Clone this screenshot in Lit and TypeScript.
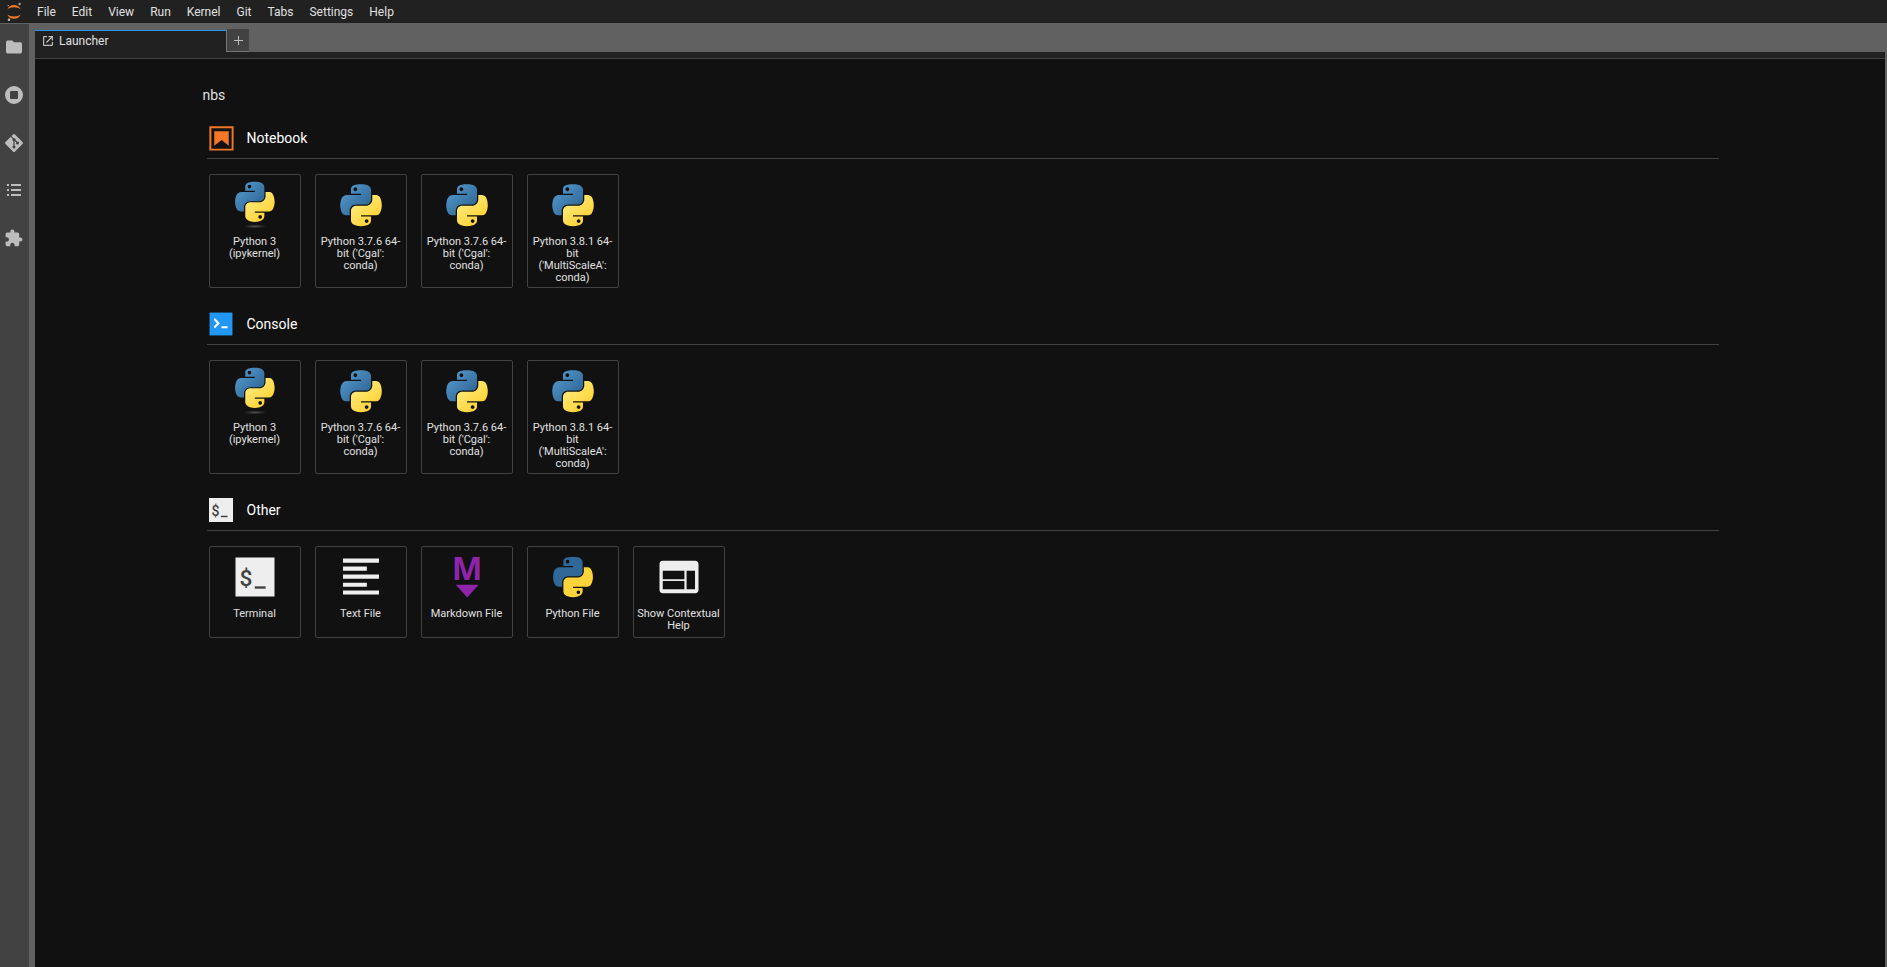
import { LitElement, html, css, svg, TemplateResult } from "lit";
import { customElement, property } from "lit/decorators.js";

const PY_BLUE =
  "M54.918785 .00091927C50.335132 .02221727 45.957846 .41313697 42.106285 1.0946693 30.760069 3.0991731 28.700036 7.2947714 28.700035 15.032169v10.21875h26.8125v3.40625h-26.8125-10.0625c-7.792459 0-14.6157588 4.683717-16.7499998 13.59375-2.46181998 10.212966-2.57101508 16.586023 0 27.25 1.9059283 7.937852 6.4575432 13.593748 14.2499998 13.59375h9.21875v-12.25c0-8.849902 7.657144-16.656248 16.75-16.65625h26.78125c7.454951 0 13.406253-6.138164 13.40625-13.625v-25.53125c0-7.2663386-6.12998-12.7247771-13.40625-13.9374997C64.281548.32794397 59.502438-.02037903 54.918785.00091927zm-14.5 8.21875013c2.769547 0 5.03125 2.2986456 5.03125 5.1249996 0 2.816336-2.261703 5.09375-5.03125 5.09375-2.779476 0-5.03125-2.277415-5.03125-5.09375 0-2.826353 2.251774-5.1249996 5.03125-5.1249996z";
const PY_YELLOW =
  "M85.637535 28.657169v11.90625c0 9.230755-7.825895 16.999999-16.75 17h-26.78125c-7.335833 0-13.406249 6.278483-13.40625 13.625v25.531247c0 7.266344 6.318588 11.540324 13.40625 13.625004 8.487331 2.49561 16.626237 2.94663 26.78125 0 6.750155-1.95439 13.406253-5.88761 13.40625-13.625004V86.500919h-26.78125v-3.40625h40.187504c7.792461 0 10.696251-5.435408 13.406241-13.59375 2.79933-8.398886 2.68022-16.475776 0-27.25-1.92578-7.757441-5.60387-13.59375-13.406241-13.59375zm-15.0625 64.65625c2.779478 0 5.03125 2.277417 5.03125 5.093747 0 2.826354-2.251775 5.125004-5.03125 5.125004-2.76955 0-5.03125-2.29865-5.03125-5.125004 0-2.81633 2.261697-5.093747 5.03125-5.093747z";

const gradients = svg`<defs>
  <linearGradient id="b" x1="0" y1="0" x2=".8" y2=".8"><stop offset="0" stop-color="#5a9fd4"/><stop offset="1" stop-color="#306998"/></linearGradient>
  <linearGradient id="y" x1=".3" y1=".2" x2=".75" y2=".75"><stop offset="0" stop-color="#ffe873"/><stop offset="1" stop-color="#ffd43b"/></linearGradient>
  <radialGradient id="s"><stop offset="0" stop-color="#b8b8b8" stop-opacity=".4"/><stop offset="1" stop-color="#7f7f7f" stop-opacity="0"/></radialGradient>
</defs>`;

const icons: Record<string, TemplateResult> = {
  jupyter: html`<svg width="18" height="20" viewBox="0 0 18 20">
    <path fill="#f37726" d="M2.300 7.300C3.400 4.600 5.900 3 9 3s5.600 1.600 6.700 4.300C14 6 11.800 5.300 9 5.300S4 6 2.300 7.300zM2.300 12.500C4 13.800 6.200 14.500 9 14.500s5-.7 6.700-2c-1.100 2.700-3.600 4.300-6.700 4.300S3.400 15.200 2.300 12.500z"/>
    <circle cx="14.600" cy="2" r="1.200" fill="#9e9e9e"/><circle cx="3.200" cy="3.600" r=".7" fill="#bdbdbd"/><circle cx="4" cy="17.800" r="1.300" fill="#bdbdbd"/></svg>`,
  folder: html`<svg width="20" height="20" viewBox="-.5 -.5 25 25"><path fill="#bdbdbd" d="M10 4H4c-1.100 0-1.990.9-1.990 2L2 18c0 1.100.9 2 2 2h16c1.100 0 2-.9 2-2V8c0-1.100-.9-2-2-2h-8l-2-2z"/></svg>`,
  running: html`<svg width="20" height="20" viewBox="0 0 20 20"><path fill="#bdbdbd" fill-rule="evenodd" d="M10 1a9 9 0 1 0 0 18 9 9 0 0 0 0-18zM7 6h6a1 1 0 0 1 1 1v6a1 1 0 0 1-1 1H7a1 1 0 0 1-1-1V7a1 1 0 0 1 1-1z"/></svg>`,
  git: html`<svg width="20" height="20" viewBox="0 0 20 20"><path fill="#bdbdbd" d="M11 1.500a1.400 1.400 0 0 0-2 0L1.500 9a1.400 1.400 0 0 0 0 2L9 18.500a1.400 1.400 0 0 0 2 0L18.500 11a1.400 1.400 0 0 0 0-2z"/><path d="M6.800 3.200 10 6.400V14M10 6.400l3.600 3.600" fill="none" stroke="#424242" stroke-width="1.200"/><g fill="#424242"><circle cx="10" cy="6.600" r="1.500"/><circle cx="10" cy="14" r="1.500"/><circle cx="13.500" cy="10" r="1.500"/></g></svg>`,
  list: html`<svg width="20" height="20" viewBox="0 1 20 20"><path fill="#bdbdbd" d="M3 4h2v2H3zM7 4h10v2H7zM3 9h2v2H3zM7 9h10v2H7zM3 14h2v2H3zM7 14h10v2H7z"/></svg>`,
  puzzle: html`<svg width="20" height="20" viewBox="0 .5 25 25"><path fill="#bdbdbd" d="M20.500 11H19V7c0-1.100-.9-2-2-2h-4V3.500C13 2.120 11.880 1 10.500 1S8 2.120 8 3.500V5H4c-1.100 0-1.990.9-1.990 2v3.800H3.500c1.490 0 2.700 1.210 2.700 2.700s-1.210 2.700-2.700 2.700H2V20c0 1.100.9 2 2 2h3.800v-1.500c0-1.490 1.210-2.700 2.700-2.700 1.490 0 2.700 1.210 2.700 2.700V22H17c1.100 0 2-.9 2-2v-4h1.500c1.380 0 2.500-1.120 2.500-2.500S21.880 11 20.500 11z"/></svg>`,
  launch: html`<svg width="14" height="14" viewBox="0 0 14 14"><path fill="#bdbdbd" d="M6 2v1.200H3.200v7.600h7.600V8H12v3a1 1 0 0 1-1 1H3a1 1 0 0 1-1-1V3a1 1 0 0 1 1-1zM7.500 2v1.200h2.400L5 8.100l.9.900 4.900-4.900v2.400H12V2z"/></svg>`,
  notebook: html`<svg viewBox="0 0 22 22"><path fill="#f37726" d="M18.700 3.300v15.400H3.300V3.300h15.400m1.500-1.500H1.800v18.300h18.300zM16.500 16.500l-5.400-4.300-5.600 4.300v-11h11z"/></svg>`,
  console: html`<svg viewBox="0 0 200 200"><path fill="#2196f3" d="M12 12h176v176H12z"/><path fill="#fff" d="m43 66 11-10 37 38-37 38-11-10 26-28zM104 118h46v15h-46z"/></svg>`,
  terminal: html`<svg viewBox="0 0 24 24"><path fill="#eee" d="M3 3h18v18H3z"/><text x="4.800" y="16.300" font-family="Roboto, sans-serif" font-size="10.500" font-weight="500" fill="#424242">$</text><path fill="#424242" d="M11.900 16.300h5v1.100h-5z"/></svg>`,
  text: html`<svg viewBox="0 0 24 24"><path fill="#eee" d="M3.700 3.500h16.600v1.900H3.700zM3.700 7.200h11v1.900h-11zM3.700 10.900h16.600v1.900H3.700zM3.700 14.600h11v1.900h-11zM3.700 18.200h16.600v1.900H3.700z"/></svg>`,
  markdown: html`<svg viewBox="0 0 24 24"><text x="12" y="13.200" text-anchor="middle" font-family="Open Sans, sans-serif" font-size="15" font-weight="700" fill="#8e24aa">M</text><path fill="#8e24aa" d="M6.800 15.600h10.600L12.100 21.500z"/></svg>`,
  help: html`<svg viewBox="0 0 24 24"><path fill="#eee" d="M19.500 4.500h-15c-1 0-1.500.7-1.500 1.500v12c0 .9.600 1.500 1.500 1.500h15c.9 0 1.500-.6 1.500-1.500V6c0-.9-.6-1.500-1.500-1.500zm-5 13.100H4.500v-3.800h10zm0-4.600H4.500V9.100h10zm4.900 4.600h-3.900V9.100h3.900z"/></svg>`,
  pyfile: html`<svg viewBox="-17 -15 145 142"><path fill="#306998" d=${PY_BLUE}/><path fill="#ffd43b" d=${PY_YELLOW}/></svg>`,
  python: html`<svg viewBox="-14 -14 139 139">${gradients}<path fill="url(#b)" d=${PY_BLUE}/><path fill="url(#y)" d=${PY_YELLOW}/></svg>`,
  kernel: html`<svg viewBox="-17 -8 146 146">${gradients}<path fill="url(#b)" d=${PY_BLUE}/><path fill="url(#y)" d=${PY_YELLOW}/><ellipse cx="56" cy="125" rx="34" ry="6" fill="url(#s)"/></svg>`,
};

@customElement("launcher-card")
class LauncherCard extends LitElement {
  @property() icon = "";
  @property() label = "";

  static styles = css`
    :host { display: block; }
    button {
      box-sizing: border-box;
      width: 100%;
      height: 100%;
      display: flex;
      flex-direction: column;
      align-items: center;
      padding: 4px 3px 0;
      border: 1px solid #424242;
      border-radius: 2px;
      background: #111;
      color: #e0e0e0;
      font: 11px/12px Roboto, sans-serif;
      text-align: center;
    }
    .icon { width: 52px; height: 52px; margin-bottom: 5px; }
    .icon svg { display: block; width: 100%; height: 100%; overflow: visible; }
    .label { width: 100%; white-space: pre-line; }
  `;

  render() {
    return html`<button type="button">
      <span class="icon">${icons[this.icon]}</span>
      <span class="label">${this.label}</span>
    </button>`;
  }
}

interface Card { icon: string; label: string; }
interface Section { title: string; icon: string; cards: Card[]; short?: boolean; }

const kernels: Card[] = [
  { icon: "kernel", label: "Python 3 (ipykernel)" },
  { icon: "python", label: "Python 3.7.6 64-bit ('Cgal': conda)" },
  { icon: "python", label: "Python 3.7.6 64-bit ('Cgal': conda)" },
  { icon: "python", label: "Python 3.8.1 64-bit\n('MultiScaleA': conda)" },
];

const sections: Section[] = [
  { title: "Notebook", icon: "notebook", cards: kernels },
  { title: "Console", icon: "console", cards: kernels },
  {
    title: "Other",
    icon: "terminal",
    short: true,
    cards: [
      { icon: "terminal", label: "Terminal" },
      { icon: "text", label: "Text File" },
      { icon: "markdown", label: "Markdown File" },
      { icon: "pyfile", label: "Python File" },
      { icon: "help", label: "Show Contextual Help" },
    ],
  },
];

const menus = ["File", "Edit", "View", "Run", "Kernel", "Git", "Tabs", "Settings", "Help"];
const panels = [
  ["folder", "File Browser"],
  ["running", "Running Terminals and Kernels"],
  ["git", "Git"],
  ["list", "Table of Contents"],
  ["puzzle", "Extension Manager"],
];

@customElement("app-root")
class AppRoot extends LitElement {
  static styles = css`
    :host {
      display: flex;
      flex-direction: column;
      height: 100vh;
      background: #616161;
      color: #e0e0e0;
      font: 12px/16px Roboto, sans-serif;
    }
    button { font: inherit; color: inherit; background: none; border: 0; padding: 0; }
    svg { display: block; overflow: visible; }
    .menubar {
      display: flex;
      align-items: center;
      height: 23px;
      padding-left: 5px;
      background: #212121;
      border-bottom: 1px solid #616161;
    }
    .menus { display: flex; margin-left: 6px; }
    .menus button { padding: 1px 8px 0; height: 23px; }
    .body { display: flex; flex: 1; min-height: 0; }
    .sidebar {
      display: flex;
      flex-direction: column;
      gap: 2px;
      width: 29px;
      margin-right: 6px;
      background: #424242;
    }
    .sidebar button {
      display: flex;
      align-items: center;
      justify-content: center;
      width: 28px;
      height: 46px;
    }
    .main { display: flex; flex-direction: column; flex: 1; min-width: 0; margin-right: 2px; }
    .tabs { display: flex; align-items: flex-end; height: 28px; }
    .tab {
      box-sizing: border-box;
      display: flex;
      align-items: center;
      gap: 4px;
      width: 191px;
      height: 22px;
      padding: 0 0 2px 6px;
      border-top: 1px solid #2196f3;
      background: #212121;
    }
    .add {
      display: flex;
      align-items: center;
      justify-content: center;
      align-self: flex-start;
      box-sizing: border-box;
      width: 23px;
      height: 23px;
      margin-top: 5px;
      border: 1px solid #757575;
      border-width: 0 0 1px 1px;
      background: #424242;
    }
    .toolbar { height: 6px; background: #212121; border-bottom: 1px solid #424242; }
    .launcher {
      flex: 1;
      overflow: auto;
      padding: 26px 9% 0;
      background: #111;
    }
    .cwd { margin: 0 0 21px; padding-left: 1px; font-size: 14px; line-height: 20px; }
    section { margin: 0 0 24px 5px; }
    header {
      display: flex;
      align-items: center;
      gap: 12px;
      height: 33px;
      box-sizing: border-box;
      padding: 0 0 8px 1px;
      border-bottom: 1px solid #424242;
    }
    .section-icon { display: flex; align-items: center; justify-content: center; width: 27px; height: 24px; }
    .section-icon svg { flex: none; width: 26px; height: 26px; }
    .notebook svg { width: 29px; height: 29px; }
    .terminal svg { width: 32px; height: 32px; }
    h2 { margin: 0; font-size: 14px; line-height: 20px; font-weight: 400; color: #fff; }
    .cards {
      display: grid;
      grid-template-columns: repeat(auto-fill, 92px);
      grid-auto-rows: 114px;
      gap: 14px;
      padding: 15px 0 0 2px;
    }
    .short { grid-auto-rows: 92px; }
  `;

  render() {
    return html`
      <div class="menubar">
        ${icons.jupyter}
        <nav class="menus">${menus.map((m) => html`<button type="button">${m}</button>`)}</nav>
      </div>
      <div class="body">
        <nav class="sidebar">
          ${panels.map(([icon, name]) => html`<button type="button" aria-label=${name}>${icons[icon]}</button>`)}
        </nav>
        <main class="main">
          <div class="tabs">
            <button type="button" class="tab">${icons.launch}<span>Launcher</span></button>
            <button type="button" class="add" aria-label="New Launcher">
              <svg width="9" height="9" viewBox="0 0 9 9"><path d="M4 0h1v4h4v1H5v4H4V5H0V4h4z" fill="#bdbdbd"/></svg>
            </button>
          </div>
          <div class="toolbar"></div>
          <div class="launcher">
            <p class="cwd">nbs</p>
            ${sections.map(
              (s) => html`<section>
                <header>
                  <span class="section-icon ${s.icon}">${icons[s.icon]}</span>
                  <h2>${s.title}</h2>
                </header>
                <div class="cards ${s.short ? "short" : ""}">
                  ${s.cards.map((c) => html`<launcher-card .icon=${c.icon} .label=${c.label}></launcher-card>`)}
                </div>
              </section>`
            )}
          </div>
        </main>
      </div>
    `;
  }
}
